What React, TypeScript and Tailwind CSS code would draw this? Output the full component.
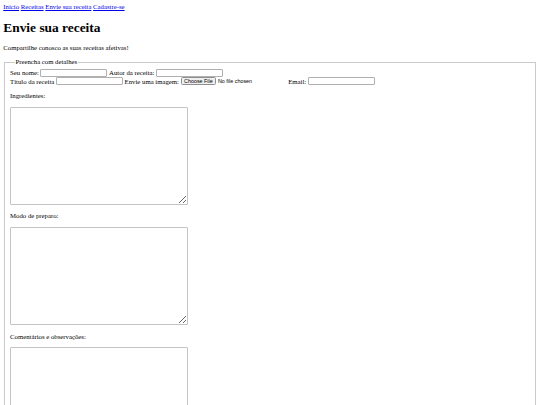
import React from "react";

const navLinks = ["Início", "Receitas", "Envie sua receita", "Cadastre-se"];

const fieldInput =
  "box-border h-[8px] w-[67px] rounded-[1px] border border-[#b0b0b0] bg-white";

const TextBox = () => (
  <textarea className="box-border block h-[98px] w-[178px] resize rounded-[1px] border border-[#c4c4c4] bg-white" />
);

export default function App() {
  return (
    <div className="min-h-[405px] bg-white p-[3.3px] font-['Liberation_Serif',serif] text-[6.75px] leading-[1.15] text-black">
      <nav>
        {navLinks.map((label, i) => (
          <React.Fragment key={label}>
            {i > 0 && " "}
            <a href="#" className="text-[#0000ee] underline">
              {label}
            </a>
          </React.Fragment>
        ))}
      </nav>

      <h1 className="my-[8.7px] text-[13.4px] font-bold leading-[1.15]">
        Envie sua receita
      </h1>
      <p className="my-[6.6px]">Compartilhe conosco as suas receitas afetivas!</p>

      <fieldset className="mx-[0.8px] border border-[#cbcbcb] pb-[5px] pl-[5px] pr-[5px] pt-[2.6px]">
        <legend className="ml-[4.5px] px-[0.8px]">Preencha com detalhes</legend>

        <div className="flex h-[8.6px] items-center gap-[1.65px]">
          <label>Seu nome:</label>
          <input className={fieldInput} />
          <label>Autor da receita:</label>
          <input className={fieldInput} />
        </div>

        <div className="flex h-[8.6px] items-center gap-[1.65px]">
          <label>Título da receita</label>
          <input className={fieldInput} />
          <label>Envie uma imagem:</label>
          <div className="flex w-[106px] items-center font-['Liberation_Sans',sans-serif] text-[5.4px]">
            <span className="box-border flex h-[8px] items-center rounded-[1.5px] border border-[#8f8f8f] bg-[#efefef] px-[2.4px]">
              Choose File
            </span>
            <span className="ml-[1.8px]">No file chosen</span>
          </div>
          <label>Email:</label>
          <input className={fieldInput} />
        </div>

        <p className="mb-[6.6px] mt-[6.6px]">Ingredientes:</p>
        <TextBox />

        <p className="mb-[6.6px] mt-[7.8px]">Modo de preparo:</p>
        <TextBox />

        <p className="mb-[6.6px] mt-[8.1px]">Comentários e observações:</p>
        <TextBox />
      </fieldset>
    </div>
  );
}
